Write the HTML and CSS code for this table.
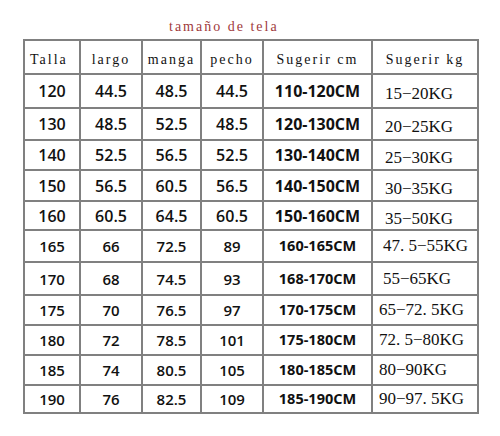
FILE: index.html
```html
<!DOCTYPE html>
<html lang="es">
<head>
<meta charset="utf-8">
<title>tamaño de tela</title>
<link rel="stylesheet" href="styles.css">
</head>
<body>
<div class="sheet">
  <div class="title">tamaño de tela</div>
  <table class="sizes">
    <colgroup>
      <col class="c-talla"><col class="c-largo"><col class="c-manga"><col class="c-pecho"><col class="c-cm"><col class="c-kg">
    </colgroup>
    <thead>
      <tr class="head">
        <th class="th-talla">Talla</th><th>largo</th><th>manga</th><th>pecho</th><th>Sugerir cm</th><th>Sugerir kg</th>
      </tr>
    </thead>
    <tbody>
      <tr class="up h34"><td>120</td><td>44.5</td><td>48.5</td><td>44.5</td><td class="cm">110-120CM</td><td class="kg">15−20KG</td></tr>
      <tr class="up h32"><td>130</td><td>48.5</td><td>52.5</td><td>48.5</td><td class="cm">120-130CM</td><td class="kg">20−25KG</td></tr>
      <tr class="up h30"><td>140</td><td>52.5</td><td>56.5</td><td>52.5</td><td class="cm">130-140CM</td><td class="kg">25−30KG</td></tr>
      <tr class="up h31"><td>150</td><td>56.5</td><td>60.5</td><td>56.5</td><td class="cm">140-150CM</td><td class="kg">30−35KG</td></tr>
      <tr class="up h29"><td>160</td><td>60.5</td><td>64.5</td><td>60.5</td><td class="cm">150-160CM</td><td class="kg">35−50KG</td></tr>
      <tr class="low h32"><td>165</td><td>66</td><td>72.5</td><td>89</td><td class="cm">160-165CM</td><td class="kg">47. 5−55KG</td></tr>
      <tr class="low h33"><td>170</td><td>68</td><td>74.5</td><td>93</td><td class="cm">168-170CM</td><td class="kg">55−65KG</td></tr>
      <tr class="low h30"><td>175</td><td>70</td><td>76.5</td><td>97</td><td class="cm">170-175CM</td><td class="kg far">65−72. 5KG</td></tr>
      <tr class="low h30"><td>180</td><td>72</td><td>78.5</td><td>101</td><td class="cm">175-180CM</td><td class="kg far">72. 5−80KG</td></tr>
      <tr class="low h30"><td>185</td><td>74</td><td>80.5</td><td>105</td><td class="cm">180-185CM</td><td class="kg far">80−90KG</td></tr>
      <tr class="low h28"><td>190</td><td>76</td><td>82.5</td><td>109</td><td class="cm">185-190CM</td><td class="kg far">90−97. 5KG</td></tr>
    </tbody>
  </table>
</div>
</body>
</html>
```
FILE: styles.css
```css
html, body {
  margin: 0;
  padding: 0;
  background: #ffffff;
}

.sheet {
  padding: 17px 0 0 23px;
}

.title {
  padding-left: 146px;
  font-family: "Liberation Serif", serif;
  font-size: 14px;
  letter-spacing: 2px;
  line-height: 20px;
  color: #a03a3c;
  margin-bottom: 2px;
}

.sizes {
  border-collapse: collapse;
  table-layout: fixed;
  width: 454px;
  color: #111;
}

.c-talla { width: 56px; }
.c-largo { width: 62px; }
.c-manga { width: 59px; }
.c-pecho { width: 62px; }
.c-cm { width: 109px; }
.c-kg { width: 106px; }

.sizes th,
.sizes td {
  border: 2px solid #808080;
  padding: 0;
  text-align: center;
  vertical-align: middle;
  white-space: nowrap;
}

.head { height: 34px; }

.sizes th {
  font-family: "Liberation Serif", serif;
  font-weight: normal;
  font-size: 14px;
  letter-spacing: 2px;
  padding-top: 5px;
}

.sizes th.th-talla {
  text-align: left;
  padding-left: 5px;
}

.h28 { height: 28px; }
.h29 { height: 29px; }
.h30 { height: 30px; }
.h31 { height: 31px; }
.h32 { height: 32px; }
.h33 { height: 33px; }
.h34 { height: 34px; }

.sizes td {
  font-family: "Open Sans", sans-serif;
  font-weight: 600;
  font-size: 16px;
  line-height: 18px;
}

.low td {
  font-size: 15px;
}

.sizes td.cm {
  font-weight: 700;
  font-size: 16px;
}

.low td.cm {
  font-size: 14.5px;
}

.sizes td.kg {
  font-family: "Liberation Serif", serif;
  font-weight: normal;
  font-size: 17px;
  text-align: left;
  padding-left: 12px;
  padding-top: 6px;
}

.low td.kg {
  padding-left: 10px;
  padding-top: 0;
}

.low td.kg.far {
  padding-left: 6px;
}
```
